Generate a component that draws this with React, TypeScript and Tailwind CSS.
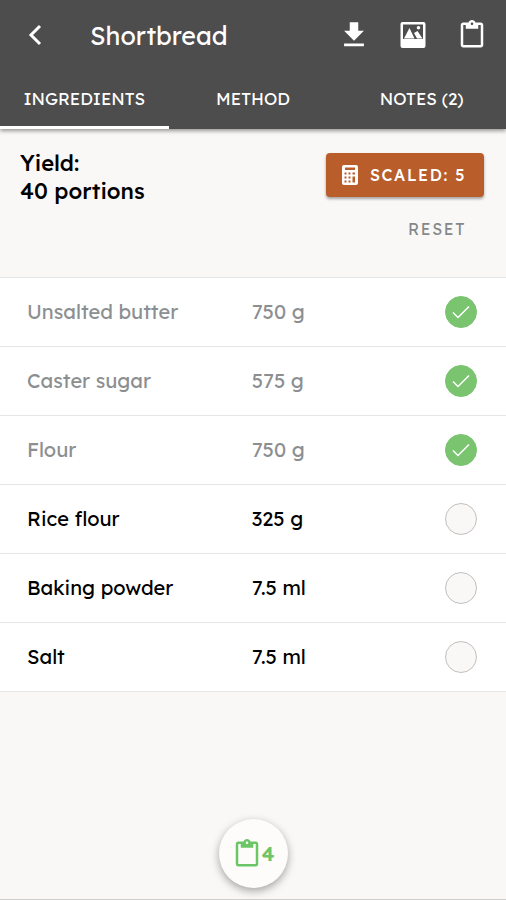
import React, { useState } from "react";
import { MdContentPaste, MdDownload } from "react-icons/md";

type Ingredient = {
  id: string;
  name: string;
  amount: string;
  done: boolean;
};

const initialIngredients: Ingredient[] = [
  { id: "butter", name: "Unsalted butter", amount: "750 g", done: true },
  { id: "sugar", name: "Caster sugar", amount: "575 g", done: true },
  { id: "flour", name: "Flour", amount: "750 g", done: true },
  { id: "rice-flour", name: "Rice flour", amount: "325 g", done: false },
  { id: "baking-powder", name: "Baking powder", amount: "7.5 ml", done: false },
  { id: "salt", name: "Salt", amount: "7.5 ml", done: false },
];

const tabs = ["INGREDIENTS", "METHOD", "NOTES (2)"];

const PhotoIcon: React.FC = () => (
  <svg viewBox="0 0 26 28" className="h-7 w-[26px]" aria-hidden="true">
    <path
      fill="currentColor"
      fillRule="evenodd"
      d="M2.5 1h21a2 2 0 0 1 2 2v22a2 2 0 0 1-2 2h-21a2 2 0 0 1-2-2V3a2 2 0 0 1 2-2ZM3 3.5V18h20V3.5Z"
    />
    <path fill="currentColor" d="M4 17.5L9.5 7L14.5 17.5ZM14 12L17.5 10L22.5 17.5H17Z" />
    <circle cx="18.5" cy="6.8" r="1.8" fill="currentColor" />
  </svg>
);

const CalculatorIcon: React.FC = () => (
  <svg viewBox="0 0 16 20" className="h-5 w-4" aria-hidden="true">
    <path
      fill="currentColor"
      fillRule="evenodd"
      d="M2 0h12a2 2 0 0 1 2 2v16a2 2 0 0 1-2 2H2a2 2 0 0 1-2-2V2A2 2 0 0 1 2 0ZM3 2.5V5h10V2.5ZM2.5 7.5v2h2v-2ZM6.5 7.5v2h2v-2ZM10.5 7.5v2H13v-2ZM2.5 11.5v2h2v-2ZM6.5 11.5v2h2v-2ZM10.5 11.5v6H13v-6ZM2.5 15.5v2h2v-2ZM6.5 15.5v2h2v-2Z"
    />
  </svg>
);

const App: React.FC = () => {
  const [ingredients, setIngredients] = useState(initialIngredients);
  const [activeTab, setActiveTab] = useState("INGREDIENTS");

  const toggle = (id: string) =>
    setIngredients((items) =>
      items.map((item) => (item.id === id ? { ...item, done: !item.done } : item))
    );

  const handleReset = () =>
    setIngredients((items) => items.map((item) => ({ ...item, done: false })));

  return (
    <div className="flex min-h-screen flex-col border-b border-[#cfcfcf] bg-[#faf8f7] font-['Lexend','Inter',sans-serif] text-black">
      <header className="bg-[#4d4d4d] text-white shadow-[0_2px_4px_rgba(0,0,0,0.4)]">
        <div className="flex h-[70px] items-center pr-[5px] pl-6">
          <button type="button" aria-label="Back" className="w-6">
            <svg
              viewBox="0 0 24 24"
              className="size-6"
              fill="none"
              stroke="currentColor"
              strokeWidth="3"
              aria-hidden="true"
            >
              <path d="M16 3L7 12l9 9" />
            </svg>
          </button>
          <h1 className="flex-1 pt-0.5 pl-[42px] text-[25px]">Shortbread</h1>
          <div className="flex items-center">
            <button type="button" aria-label="Download" className="flex w-[59px] justify-center">
              <MdDownload className="size-[34px]" />
            </button>
            <button type="button" aria-label="Photos" className="flex w-[59px] justify-center">
              <PhotoIcon />
            </button>
            <button type="button" aria-label="Shopping list" className="flex w-[59px] justify-center">
              <MdContentPaste className="size-[30px]" />
            </button>
          </div>
        </div>
        <nav className="grid grid-cols-3">
          {tabs.map((tab) => (
            <button
              key={tab}
              type="button"
              onClick={() => setActiveTab(tab)}
              className={`h-[59px] border-b-3 pt-0.5 text-[17px] ${
                tab === activeTab ? "border-white" : "border-transparent"
              }`}
            >
              {tab}
            </button>
          ))}
        </nav>
      </header>

      <section className="flex h-[148px] items-start justify-between pt-5 pr-[22px] pl-5">
        <p className="text-[22px] leading-7 font-medium">
          Yield:
          <br />
          40 portions
        </p>
        <div className="flex flex-col items-end gap-5 pt-1">
          <button
            type="button"
            className="flex h-11 items-center gap-3 rounded bg-[#b95d2b] pr-[18px] pl-4 text-base font-medium tracking-widest text-white shadow-[0_2px_3px_rgba(0,0,0,0.35)]"
          >
            <CalculatorIcon />
            SCALED: 5
          </button>
          <button
            type="button"
            onClick={handleReset}
            className="mr-[18px] text-base leading-6 tracking-widest text-[#85888a]"
          >
            RESET
          </button>
        </div>
      </section>

      <table className="w-full table-fixed bg-white text-left text-xl">
        <tbody>
          {ingredients.map((item) => (
            <tr
              key={item.id}
              className={`h-[69px] border-y border-[#e6e6e6] ${item.done ? "text-[#8c8f91]" : "text-black"}`}
            >
              <th scope="row" className="w-[45%] pl-[27px] font-normal">
                <label htmlFor={item.id}>{item.name}</label>
              </th>
              <td className="pl-6">{item.amount}</td>
              <td className="w-1/4 pr-[29px]">
                <div className="ml-auto grid size-8 place-items-center">
                  <input
                    id={item.id}
                    type="checkbox"
                    checked={item.done}
                    onChange={() => toggle(item.id)}
                    className="col-start-1 row-start-1 size-8 appearance-none rounded-full border border-[#c2c0bf] bg-[#faf8f7] checked:border-[#7ac470] checked:bg-[#7ac470]"
                  />
                  {item.done && (
                    <svg
                      viewBox="0 0 18 14"
                      className="pointer-events-none col-start-1 row-start-1 h-[14px] w-[18px] text-white"
                      fill="none"
                      stroke="currentColor"
                      strokeWidth="1.5"
                      aria-hidden="true"
                    >
                      <path d="M1 7.5L6 12.5L17 1.5" />
                    </svg>
                  )}
                </div>
              </td>
            </tr>
          ))}
        </tbody>
      </table>

      <footer className="mt-auto flex justify-center pt-6 pb-[11px]">
        <button
          type="button"
          className="flex size-[69px] items-center justify-center rounded-full bg-[#fdfcfb] text-xl font-semibold text-[#6cc566] shadow-[0_3px_8px_rgba(0,0,0,0.35)]"
        >
          <MdContentPaste className="size-[30px]" />
          4
        </button>
      </footer>
    </div>
  );
};

export default App;
